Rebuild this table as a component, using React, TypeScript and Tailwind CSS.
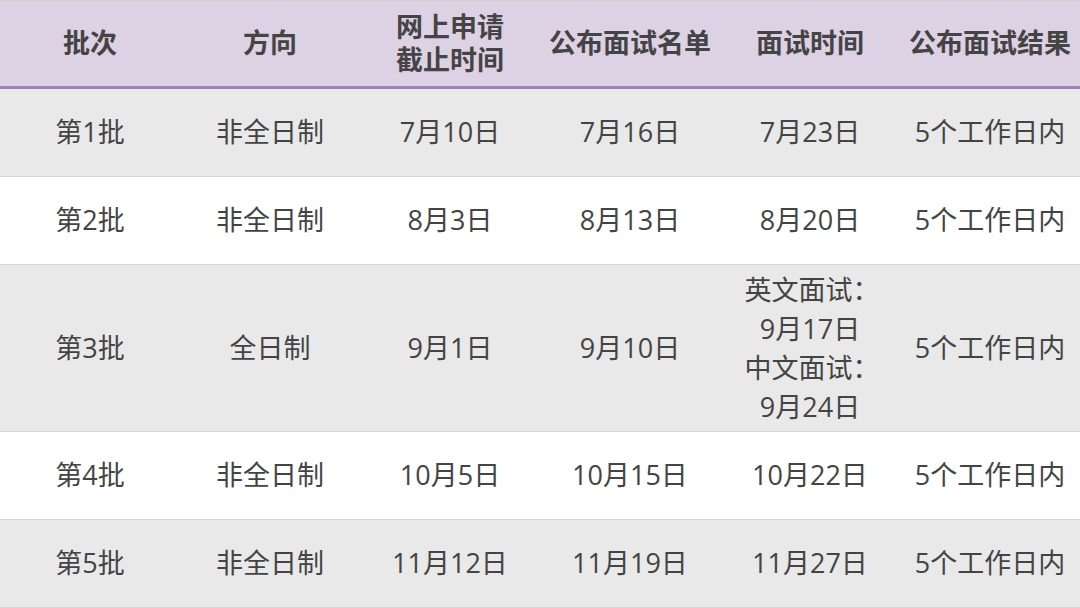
import React from "react";

const rows: { cells: React.ReactNode[]; bg: string; h: string }[] = [
  { cells: ["第1批", "非全日制", "7月10日", "7月16日", "7月23日", "5个工作日内"], bg: "bg-[#e9e9e9]", h: "h-[88px]" },
  { cells: ["第2批", "非全日制", "8月3日", "8月13日", "8月20日", "5个工作日内"], bg: "bg-white", h: "h-[88px]" },
  {
    cells: [
      "第3批",
      "全日制",
      "9月1日",
      "9月10日",
      <div className="leading-[39px]">
        <div className="pl-[4px]">英文面试：</div>
        <div>9月17日</div>
        <div className="pl-[4px]">中文面试：</div>
        <div>9月24日</div>
      </div>,
      "5个工作日内",
    ],
    bg: "bg-[#e9e9e9]",
    h: "h-[167px]",
  },
  { cells: ["第4批", "非全日制", "10月5日", "10月15日", "10月22日", "5个工作日内"], bg: "bg-white", h: "h-[88px]" },
  { cells: ["第5批", "非全日制", "11月12日", "11月19日", "11月27日", "5个工作日内"], bg: "bg-[#e9e9e9]", h: "h-[88px]" },
];

const headers: React.ReactNode[] = [
  "批次",
  "方向",
  <div className="leading-[33px]">
    <div>网上申请</div>
    <div>截止时间</div>
  </div>,
  "公布面试名单",
  "面试时间",
  "公布面试结果",
];

export default function App() {
  return (
    <div
      className="w-[1080px] h-[608px] overflow-hidden bg-white text-[#444444] text-[27px]"
      style={{ fontFamily: '"Open Sans", "Noto Sans CJK SC", sans-serif' }}
    >
      <div className="grid grid-cols-6 h-[89px] bg-[#ddd1e4] border-t border-[#cfcfcf] border-b-[3px] border-b-[#9d84b3] font-bold">
        {headers.map((h, i) => (
          <div key={i} className="flex items-center justify-center text-center whitespace-nowrap pb-[1px]">
            {h}
          </div>
        ))}
      </div>
      {rows.map((r, ri) => (
        <div key={ri} className={`grid grid-cols-6 ${r.h} ${r.bg} border-b border-[#d6d6d6]`}>
          {r.cells.map((c, ci) => (
            <div key={ci} className="flex items-center justify-center text-center whitespace-nowrap">
              {c}
            </div>
          ))}
        </div>
      ))}
    </div>
  );
}
